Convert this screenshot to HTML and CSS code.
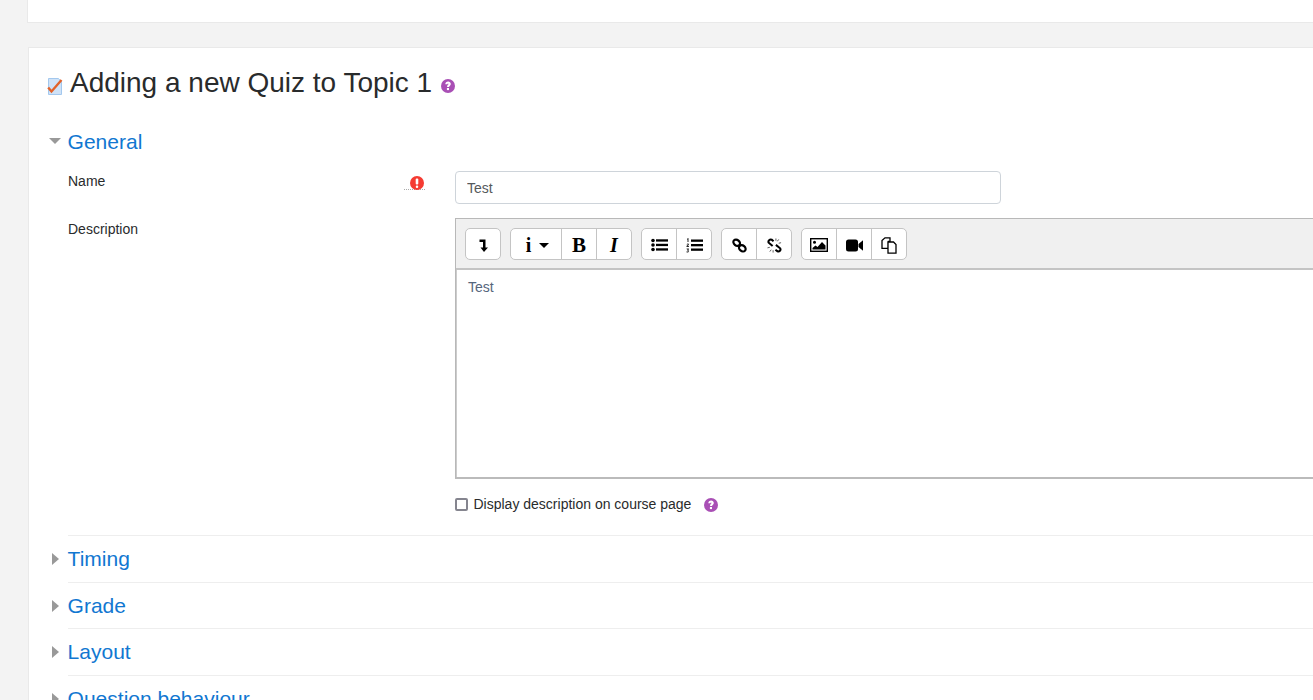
FILE: index.html
```html
<!DOCTYPE html>
<html lang="en">
<head>
  <meta charset="UTF-8">
  <meta name="viewport" content="width=device-width, initial-scale=1.0">
  <title>Adding a new Quiz</title>
  <link rel="stylesheet" href="styles.css">
</head>
<body>
  <div class="card card-top"></div>

  <div class="card card-main">
    <h2 class="page-title">
      <svg class="quiz-icon" width="16" height="17" viewBox="0 0 16 17">
        <path d="M1.500.5h10l3 3.500v12.500h-13z" fill="#cfe2f7" stroke="#a3c8ee"/>
        <path d="M1.200 9.500l3.300 4L14.500 2" fill="none" stroke="#e2622a" stroke-width="2.400"/>
      </svg>
      <span>Adding a new Quiz to Topic 1</span>
      <svg class="help-icon help-big" width="14" height="14" viewBox="0 0 14 14">
        <circle cx="7" cy="7" r="7" fill="#a94fb5"/>
        <path d="M4.300 5.300c.1-1.600 1.300-2.700 2.800-2.700s2.700 1 2.700 2.300c0 1.900-1.800 1.800-1.800 3.200H6c0-2.300 1.500-2.200 1.500-3.100 0-.3-.2-.5-.5-.5-.4 0-.6.300-.6.800z" fill="#fff"/>
        <rect x="5.900" y="9" width="2.100" height="2.100" fill="#fff"/>
      </svg>
    </h2>

    <div class="section section-open">
      <h3 class="section-head">
        <span class="caret-down"></span>
        <a href="#">General</a>
      </h3>

      <div class="form-row row-name">
        <div class="form-label">
          <span>Name</span>
          <span class="required">
            <svg width="14" height="14" viewBox="0 0 14 14">
              <circle cx="7" cy="7" r="7" fill="#f53b32"/>
              <rect x="5.700" y="2.500" width="2.600" height="6" rx="1" fill="#fff"/>
              <rect x="5.800" y="9.500" width="2.400" height="2.400" rx="1" fill="#fff"/>
            </svg>
          </span>
        </div>
        <input class="text-input" type="text" value="Test">
      </div>

      <div class="form-row row-desc">
        <div class="form-label label-desc"><span>Description</span></div>
        <div class="form-field">
          <div class="editor">
            <div class="toolbar">
              <div class="btn-group">
                <button class="tool-btn btn-solo" type="button">
                  <svg width="14" height="14" viewBox="0 0 14 14"><path d="M3.500 1.500h6v8H12L8 14 4.500 9.500h2.500V4H3.500z" fill="#000"/></svg>
                </button>
              </div>
              <div class="btn-group">
                <button class="tool-btn btn-wide" type="button">
                  <span class="glyph-i">i</span><span class="tool-caret"></span>
                </button>
                <button class="tool-btn glyph-b" type="button">B</button>
                <button class="tool-btn glyph-em" type="button">I</button>
              </div>
              <div class="btn-group btn-tight">
                <button class="tool-btn" type="button">
                  <svg width="17" height="14" viewBox="0 0 17 14"><circle cx="2" cy="2.500" r="1.800"/><circle cx="2" cy="7" r="1.800"/><circle cx="2" cy="11.500" r="1.800"/><rect x="5" y="1.300" width="12" height="2.300"/><rect x="5" y="5.800" width="12" height="2.300"/><rect x="5" y="10.300" width="12" height="2.300"/></svg>
                </button>
                <button class="tool-btn" type="button">
                  <svg width="17" height="15" viewBox="0 0 17 15"><path d="M1 .800 2.500 0v4h-1V1.500H1zM.600 6.200c.3-1 2.300-1 2.300.2 0 .7-.8 1.100-1.200 1.500h1.200V9H.500v-.9c.6-.6 1.300-1 1.300-1.500 0-.4-.6-.3-.7.100zM.600 10.500h2.300v.9l-.7.600c1 .3.900 2.500-.6 2.500-.5 0-.9-.1-1.100-.3v-.9c.5.300 1.500.3 1.500-.3 0-.4-.5-.4-.9-.4v-.8l.7-.5H.600z" fill="#222"/><rect x="5" y="1.500" width="12" height="2.300"/><rect x="5" y="6" width="12" height="2.300"/><rect x="5" y="10.500" width="12" height="2.300"/></svg>
                </button>
              </div>
              <div class="btn-group btn-tight">
                <button class="tool-btn" type="button">
                  <svg width="15" height="15" viewBox="0 0 16 16" fill="none" stroke="#000" stroke-width="2.400"><ellipse cx="5" cy="5" rx="3.800" ry="3" transform="rotate(40 5 5)"/><ellipse cx="11" cy="11" rx="3.800" ry="3" transform="rotate(40 11 11)"/></svg>
                </button>
                <button class="tool-btn" type="button">
                  <svg width="15" height="15" viewBox="0 0 16 16" fill="none" stroke="#000" stroke-width="2.200"><path d="M7 3.500 5 1.800C3 1 .8 3 1.800 5l4.200 3.500"/><path d="M9.500 7.300l4.500 3.700c1.200 2-.8 4-2.800 3.200L9 12.500"/><path d="M9.500.5v2.500M12.500 1.500 11 3.500M15 5l-2.500.6M.500 10.500l2.500-.6M3 14.500l1.500-2M6.500 15.500V13" stroke="#555" stroke-width="1"/></svg>
                </button>
              </div>
              <div class="btn-group btn-tight">
                <button class="tool-btn" type="button">
                  <svg width="18" height="14" viewBox="0 0 18 14"><rect x=".7" y=".7" width="16.600" height="12.600" fill="#fff" stroke="#000" stroke-width="1.400"/><circle cx="4.500" cy="4.300" r="1.500"/><path d="M2.500 11.500V10l3-2.500 2 1.500 4.500-5 3.500 3.500v4z"/></svg>
                </button>
                <button class="tool-btn" type="button">
                  <svg width="17" height="13" viewBox="0 0 17 13"><rect x="0" y=".5" width="12" height="12" rx="2.500"/><path d="M12.500 5 17 1.200v10.600L12.500 8z"/></svg>
                </button>
                <button class="tool-btn" type="button">
                  <svg width="16" height="17" viewBox="0 0 16 17" fill="#fff" stroke="#000" stroke-width="1.300"><path d="M1 3.500 4 .8h5v3.500H7.500v7H1z"/><path d="M7 5h5.500L15 7.500v8.700H7z"/></svg>
                </button>
              </div>
            </div>
            <div class="editor-body">Test</div>
          </div>
          <label class="check-row">
            <input class="check-box" type="checkbox">
            <span>Display description on course page</span>
            <svg class="help-icon help-small" width="14" height="14" viewBox="0 0 14 14">
              <circle cx="7" cy="7" r="7" fill="#a94fb5"/>
              <path d="M4.300 5.300c.1-1.600 1.300-2.700 2.800-2.700s2.700 1 2.700 2.300c0 1.900-1.800 1.800-1.800 3.200H6c0-2.300 1.500-2.200 1.500-3.100 0-.3-.2-.5-.5-.5-.4 0-.6.300-.6.800z" fill="#fff"/>
              <rect x="5.900" y="9" width="2.100" height="2.100" fill="#fff"/>
            </svg>
          </label>
        </div>
      </div>
    </div>

    <div class="section">
      <h3 class="section-head"><span class="caret-right"></span><a href="#">Timing</a></h3>
    </div>
    <div class="section">
      <h3 class="section-head"><span class="caret-right"></span><a href="#">Grade</a></h3>
    </div>
    <div class="section">
      <h3 class="section-head"><span class="caret-right"></span><a href="#">Layout</a></h3>
    </div>
    <div class="section">
      <h3 class="section-head"><span class="caret-right"></span><a href="#">Question behaviour</a></h3>
    </div>
  </div>
</body>
</html>
```

FILE: styles.css
```css
html, body {
  margin: 0;
  height: 700px;
  overflow: hidden;
}

body {
  background: #f3f3f3;
  font-family: "Liberation Sans", Arial, sans-serif;
  font-size: 14px;
  line-height: 20px;
  color: #292b2c;
}

.card {
  background: #fff;
  border: 1px solid #e9e9e9;
  border-right: 0;
  margin-left: 27px;
}

.card-top {
  height: 22px;
  border-top: 0;
  margin-bottom: 24px;
}

.card-main {
  margin-left: 28px;
  padding: 0 0 0 20px;
}

.page-title {
  display: flex;
  align-items: center;
  margin: 0;
  padding-top: 16px;
  height: 38px;
  font-size: 28px;
  line-height: 34px;
  font-weight: 400;
}

.quiz-icon {
  margin: 6px 7px 0 -2px;
}

.help-big {
  margin: 5px 0 0 9px;
}

.section {
  box-sizing: content-box;
  height: 45.600px;
  margin-left: 19px;
  border-bottom: 1px solid #eee;
}

.section-open {
  height: 406px;
  margin-top: 27px;
}

.section-head {
  display: flex;
  align-items: center;
  position: relative;
  margin: 0;
  padding-top: 4px;
  height: 38px;
  font-size: 21px;
  line-height: 26px;
  font-weight: 400;
}

.section-open .section-head {
  padding-top: 0;
  height: 26px;
}

.section-head a {
  margin-left: -0.400px;
  color: #1177d1;
  text-decoration: none;
}

.caret-down {
  position: absolute;
  left: -19px;
  top: 9px;
  border-left: 6px solid transparent;
  border-right: 6px solid transparent;
  border-top: 6.500px solid #999;
}

.caret-right {
  position: absolute;
  left: -16px;
  top: 17px;
  border-top: 6px solid transparent;
  border-bottom: 6px solid transparent;
  border-left: 7px solid #999;
}

.form-row {
  display: flex;
}

.row-name {
  margin-top: 16px;
}

.row-desc {
  margin-top: 14px;
}

.form-label {
  display: flex;
  justify-content: space-between;
  box-sizing: border-box;
  width: 387px;
  padding-right: 30px;
}

.label-desc {
  padding-top: 1px;
}

.required {
  display: flex;
  align-items: flex-start;
  box-sizing: border-box;
  width: 21px;
  height: 14px;
  margin-top: 5px;
  padding-left: 6px;
  border-bottom: 1px dotted #aaa;
}

.text-input {
  box-sizing: border-box;
  width: 546px;
  height: 33px;
  padding: 0 11px;
  border: 1px solid #ced4da;
  border-radius: 4px;
  font: 14px "Liberation Sans", Arial, sans-serif;
  color: #55595c;
}

.form-field {
  flex: 1;
}

.editor {
  display: flex;
  flex-direction: column;
  box-sizing: border-box;
  height: 261px;
  border: 1px solid #b8b8b8;
  border-right: 0;
  border-bottom: 2px solid #bbb;
}

.toolbar {
  display: flex;
  gap: 9px;
  box-sizing: border-box;
  height: 51px;
  padding: 9px 9px 0;
  background: #f0f0f0;
  border-bottom: 2px solid #c4c4c4;
}

.btn-group {
  display: flex;
  box-sizing: border-box;
  height: 32px;
  background: #fff;
  border: 1px solid #c4c4c4;
  border-radius: 5px;
}

.tool-btn {
  display: flex;
  align-items: center;
  justify-content: center;
  width: 35px;
  padding: 2px 0 0;
  background: transparent;
  border: 0;
  border-left: 1px solid #c4c4c4;
  color: #000;
}

.tool-btn:first-child {
  border-left: 0;
}

.btn-tight .tool-btn:first-child {
  width: 34px;
}

.btn-solo {
  width: 34px;
}

.btn-wide {
  width: 50px;
  gap: 8px;
  padding-left: 3px;
}

.glyph-i {
  font: 700 20px "Liberation Serif", serif;
}

.tool-caret {
  border-left: 5px solid transparent;
  border-right: 5px solid transparent;
  border-top: 5px solid #000;
}

.glyph-b {
  font: 700 21px "Liberation Serif", serif;
}

.glyph-em {
  font: italic 700 20px "Liberation Serif", serif;
}

.editor-body {
  flex: 1;
  padding: 7px 11px;
  border-left: 1px solid #ccc;
  color: #55667c;
}

.check-row {
  display: flex;
  align-items: center;
  margin-top: 15px;
  height: 20px;
}

.check-box {
  appearance: none;
  box-sizing: border-box;
  width: 13px;
  height: 13px;
  margin: 0 5.500px 0 0;
  background: #fff;
  border: 2px solid #85858f;
  border-radius: 2px;
}

.help-small {
  margin: 2px 0 0 13px;
}
```
